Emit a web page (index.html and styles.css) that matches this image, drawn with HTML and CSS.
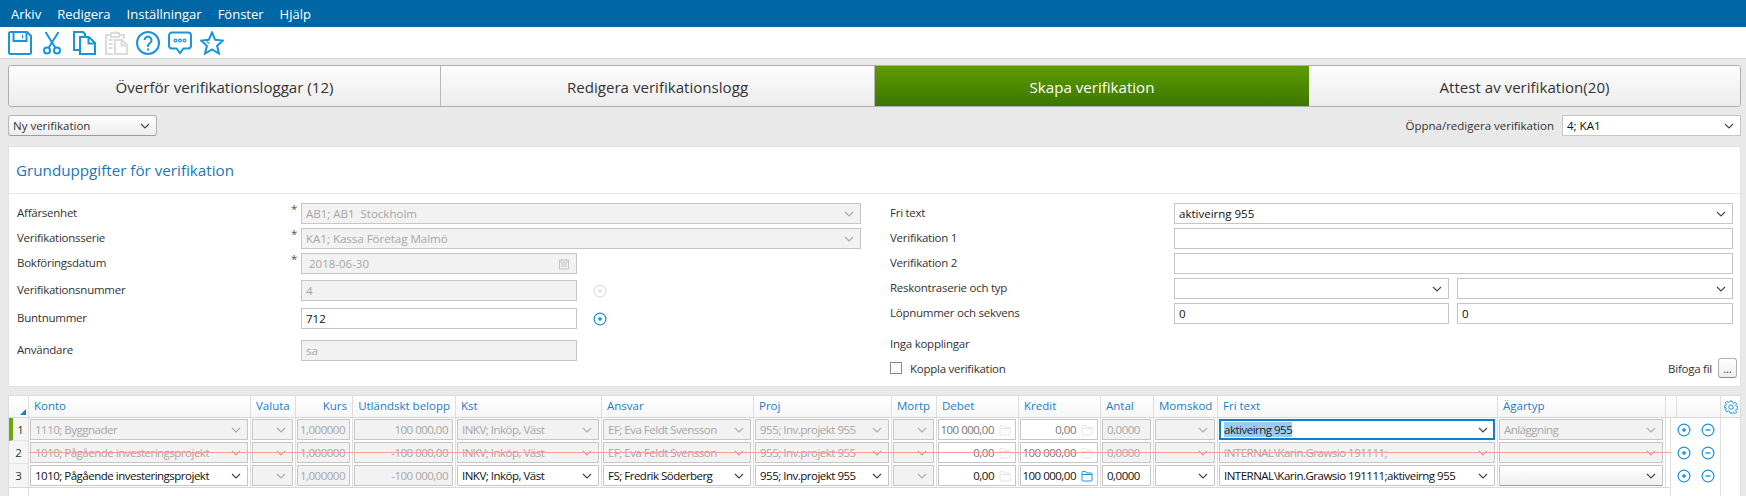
FILE: index.html
```html
<!DOCTYPE html>
<html lang="sv">
<head>
<meta charset="utf-8">
<title>Skapa verifikation</title>
<link rel="stylesheet" href="styles.css">
</head>
<body>
<svg class="sprites" xmlns="http://www.w3.org/2000/svg">
  <symbol id="chev" viewBox="0 0 10 6"><path d="M1 1l4 4 4-4" fill="none" stroke="currentColor" stroke-width="1.1"/></symbol>
  <symbol id="plus" viewBox="0 0 14 14"><circle cx="7" cy="7" r="5.9" fill="none" stroke="currentColor" stroke-width="1.2"/><path d="M5 7h4M7 5v4" stroke="currentColor" stroke-width="1.4"/></symbol>
  <symbol id="minus" viewBox="0 0 14 14"><circle cx="7" cy="7" r="5.9" fill="none" stroke="currentColor" stroke-width="1.2"/><path d="M4.5 7h5" stroke="currentColor" stroke-width="1.4"/></symbol>
  <symbol id="folder" viewBox="0 0 12 12"><path d="M1 2.5a1 1 0 0 1 1-1h2.5l1 1.5H10a1 1 0 0 1 1 1V10a1 1 0 0 1-1 1H2a1 1 0 0 1-1-1zM1 4.5h10" fill="none" stroke="currentColor" stroke-width="1"/></symbol>
</svg>

<nav class="menubar">
  <span>Arkiv</span><span>Redigera</span><span>Inställningar</span><span>Fönster</span><span>Hjälp</span>
</nav>

<div class="toolbar">
  <svg class="tool" viewBox="0 0 24 24"><path d="M2.500 1h16.500l4 4v16.500a1.500 1.500 0 0 1-1.500 1.500h-19a1.500 1.500 0 0 1-1.500-1.500v-19a1.500 1.500 0 0 1 1.500-1.500z"/><path d="M5.500 1v9h13V1"/><path class="fine" d="M14.500 3.500v4"/></svg>
  <svg class="tool tool-cut" viewBox="0 0 18 24"><circle cx="4" cy="19.500" r="3"/><circle cx="14" cy="19.500" r="3"/><path d="M5.500 17L15.500 1M12.500 17L2.500 1"/></svg>
  <svg class="tool" viewBox="0 0 24 24"><path d="M7 19H2V1h9l2 2v3"/><path d="M8 6h9l6 6v11H8zM16.500 6v6.500H23"/></svg>
  <svg class="tool tool-off" viewBox="0 0 24 24"><path d="M7 4H2v19h7M15 4h5v4M7 2h2.500a2 2 0 0 1 3 0H15v4H7z"/><path d="M11 9h7l5 5v9H11zM17.500 9v5.500H23M4.500 9h4M4.500 13h4M4.500 17h4"/></svg>
  <svg class="tool" viewBox="0 0 24 24"><circle cx="12" cy="12" r="11"/><path d="M8.500 9a3.500 3.500 0 1 1 5.500 3c-1.500 1-2 1.500-2 3v1"/><path d="M12 17.500v2"/></svg>
  <svg class="tool" viewBox="0 0 24 24"><path d="M4 1.500h16a3 3 0 0 1 3 3v10a3 3 0 0 1-3 3h-4.500l-3.500 4.500-3.500-4.500H4a3 3 0 0 1-3-3v-10a3 3 0 0 1 3-3z"/><circle class="fine" cx="7.500" cy="9.500" r="1.400"/><circle class="fine" cx="12" cy="9.500" r="1.400"/><circle class="fine" cx="16.500" cy="9.500" r="1.400"/></svg>
  <svg class="tool" viewBox="0 0 24 24"><path d="M12 1.500l3.200 7.300 7.800.8-5.900 5.200 1.800 7.700-6.900-4.100-6.900 4.100 1.800-7.700L1 9.600l7.800-.8z"/><path class="fine" d="M6.500 10.500l3 2"/></svg>
</div>

<main class="content">
  <div class="tabs">
    <div class="tab">Överför verifikationsloggar (12)</div>
    <div class="tab">Redigera verifikationslogg</div>
    <div class="tab tab-active">Skapa verifikation</div>
    <div class="tab">Attest av verifikation(20)</div>
  </div>

  <div class="actions">
    <div class="button-select">Ny verifikation<svg class="chev"><use href="#chev"/></svg></div>
    <div class="open-edit">
      <span>Öppna/redigera verifikation</span>
      <div class="field open-field">4; KA1<svg class="chev"><use href="#chev"/></svg></div>
    </div>
  </div>

  <section class="card">
    <h2 class="card-title">Grunduppgifter för verifikation</h2>
    <div class="form">
      <div class="col">
        <div class="frow"><label>Affärsenhet</label><i class="star">*</i><div class="field off">AB1; AB1&nbsp; Stockholm<svg class="chev"><use href="#chev"/></svg></div></div>
        <div class="frow"><label>Verifikationsserie</label><i class="star">*</i><div class="field off">KA1; Kassa Företag Malmö<svg class="chev"><use href="#chev"/></svg></div></div>
        <div class="frow"><label>Bokföringsdatum</label><i class="star">*</i><div class="short"><div class="field off date">2018-06-30<svg class="cal" viewBox="0 0 12 12"><path d="M1.500 2h9v9h-9zM1.500 4h9M3.500 1v1.500M8.500 1v1.500M3 6h6M3 8h6"/></svg></div></div></div>
        <div class="frow gap-6"><label>Verifikationsnummer</label><i class="star"></i><div class="short"><div class="field off">4</div><svg class="round off-icon"><use href="#plus"/></svg></div></div>
        <div class="frow gap-7"><label>Buntnummer</label><i class="star"></i><div class="short"><div class="field on">712</div><svg class="round"><use href="#plus"/></svg></div></div>
        <div class="frow gap-11"><label>Användare</label><i class="star"></i><div class="short"><div class="field off">sa</div></div></div>
      </div>
      <div class="col">
        <div class="frow"><label>Fri text</label><i class="star"></i><div class="field on">aktiveirng 955<svg class="chev"><use href="#chev"/></svg></div></div>
        <div class="frow"><label>Verifikation 1</label><i class="star"></i><div class="field on"></div></div>
        <div class="frow"><label>Verifikation 2</label><i class="star"></i><div class="field on"></div></div>
        <div class="frow"><label>Reskontraserie och typ</label><i class="star"></i><div class="pair"><div class="field on"><svg class="chev"><use href="#chev"/></svg></div><div class="field on"><svg class="chev"><use href="#chev"/></svg></div></div></div>
        <div class="frow"><label>Löpnummer och sekvens</label><i class="star"></i><div class="pair"><div class="field on">0</div><div class="field on">0</div></div></div>
        <div class="links">Inga kopplingar</div>
        <div class="link-row">
          <span class="check"></span><span class="check-label">Koppla verifikation</span>
          <span class="attach">Bifoga fil</span><span class="dots">...</span>
        </div>
      </div>
    </div>
  </section>

  <section class="grid">
    <div class="g-row g-head">
      <div class="c c-num"><span class="corner"></span></div>
      <div class="c">Konto</div><div class="c">Valuta</div><div class="c right">Kurs</div><div class="c right">Utländskt belopp</div>
      <div class="c">Kst</div><div class="c">Ansvar</div><div class="c">Proj</div><div class="c">Mortp</div>
      <div class="c">Debet</div><div class="c">Kredit</div><div class="c">Antal</div><div class="c">Momskod</div>
      <div class="c">Fri text</div><div class="c">Ägartyp</div><div class="c"></div><div class="c"></div>
      <div class="c c-gear"><svg class="gear" viewBox="0 0 14 14"><circle cx="7" cy="7" r="2.200"/><path d="M6 1h2l.4 1.600 1.400.6 1.400-.9 1.400 1.400-.9 1.400.6 1.400 1.600.4v2l-1.600.4-.6 1.400.9 1.400-1.400 1.400-1.400-.9-1.400.6L8 13H6l-.4-1.600-1.400-.6-1.400.9-1.400-1.400.9-1.400-.6-1.400L.1 8V6l1.600-.4.6-1.400-.9-1.400 1.400-1.400 1.400.9 1.400-.6z"/></svg></div>
    </div>

    <div class="g-row">
      <div class="c c-num c-mark">1</div>
      <div class="c"><div class="field off">1110; Byggnader<svg class="chev"><use href="#chev"/></svg></div></div>
      <div class="c"><div class="field off"><svg class="chev"><use href="#chev"/></svg></div></div>
      <div class="c"><div class="field off num">1,000000</div></div>
      <div class="c"><div class="field off num">100 000,00</div></div>
      <div class="c"><div class="field off">INKV; Inköp, Väst<svg class="chev"><use href="#chev"/></svg></div></div>
      <div class="c"><div class="field off">EF; Eva Feldt Svensson<svg class="chev"><use href="#chev"/></svg></div></div>
      <div class="c"><div class="field off">955; Inv.projekt 955<svg class="chev"><use href="#chev"/></svg></div></div>
      <div class="c"><div class="field off"><svg class="chev"><use href="#chev"/></svg></div></div>
      <div class="c"><div class="field on dim num">100 000,00<svg class="folder"><use href="#folder"/></svg></div></div>
      <div class="c"><div class="field on dim num">0,00<svg class="folder"><use href="#folder"/></svg></div></div>
      <div class="c"><div class="field off">0,0000</div></div>
      <div class="c"><div class="field off"><svg class="chev"><use href="#chev"/></svg></div></div>
      <div class="c"><div class="field on focus"><span class="selected">aktiveirng 955</span><svg class="chev"><use href="#chev"/></svg></div></div>
      <div class="c"><div class="field off">Anläggning<svg class="chev"><use href="#chev"/></svg></div></div>
      <div class="c"></div>
      <div class="c c-acts"><svg class="round"><use href="#plus"/></svg><svg class="round"><use href="#minus"/></svg></div>
      <div class="c c-gear"></div>
    </div>

    <div class="g-row g-deleted">
      <div class="c c-num">2</div>
      <div class="c"><div class="field off">1010; Pågående investeringsprojekt<svg class="chev"><use href="#chev"/></svg></div></div>
      <div class="c"><div class="field off"><svg class="chev"><use href="#chev"/></svg></div></div>
      <div class="c"><div class="field off num">1,000000</div></div>
      <div class="c"><div class="field off num">-100 000,00</div></div>
      <div class="c"><div class="field off">INKV; Inköp, Väst<svg class="chev"><use href="#chev"/></svg></div></div>
      <div class="c"><div class="field off">EF; Eva Feldt Svensson<svg class="chev"><use href="#chev"/></svg></div></div>
      <div class="c"><div class="field off">955; Inv.projekt 955<svg class="chev"><use href="#chev"/></svg></div></div>
      <div class="c"><div class="field off"><svg class="chev"><use href="#chev"/></svg></div></div>
      <div class="c"><div class="field on dim num">0,00<svg class="folder"><use href="#folder"/></svg></div></div>
      <div class="c"><div class="field on dim num">100 000,00<svg class="folder"><use href="#folder"/></svg></div></div>
      <div class="c"><div class="field off">0,0000</div></div>
      <div class="c"><div class="field off"><svg class="chev"><use href="#chev"/></svg></div></div>
      <div class="c"><div class="field off">INTERNAL\Karin.Grawsio 191111;<svg class="chev"><use href="#chev"/></svg></div></div>
      <div class="c"><div class="field off"><svg class="chev"><use href="#chev"/></svg></div></div>
      <div class="c"></div>
      <div class="c c-acts"><svg class="round"><use href="#plus"/></svg><svg class="round"><use href="#minus"/></svg></div>
      <div class="c c-gear"></div>
      <span class="strike"></span>
    </div>

    <div class="g-row g-last">
      <div class="c c-num">3</div>
      <div class="c"><div class="field on">1010; Pågående investeringsprojekt<svg class="chev"><use href="#chev"/></svg></div></div>
      <div class="c"><div class="field off"><svg class="chev"><use href="#chev"/></svg></div></div>
      <div class="c"><div class="field off num">1,000000</div></div>
      <div class="c"><div class="field off num">-100 000,00</div></div>
      <div class="c"><div class="field on">INKV; Inköp, Väst<svg class="chev"><use href="#chev"/></svg></div></div>
      <div class="c"><div class="field on">FS; Fredrik Söderberg<svg class="chev"><use href="#chev"/></svg></div></div>
      <div class="c"><div class="field on">955; Inv.projekt 955<svg class="chev"><use href="#chev"/></svg></div></div>
      <div class="c"><div class="field off"><svg class="chev"><use href="#chev"/></svg></div></div>
      <div class="c"><div class="field on num">0,00<svg class="folder"><use href="#folder"/></svg></div></div>
      <div class="c"><div class="field on num">100 000,00<svg class="folder live"><use href="#folder"/></svg></div></div>
      <div class="c"><div class="field on">0,0000</div></div>
      <div class="c"><div class="field on"><svg class="chev"><use href="#chev"/></svg></div></div>
      <div class="c"><div class="field on">INTERNAL\Karin.Grawsio 191111;aktiveirng 955<svg class="chev"><use href="#chev"/></svg></div></div>
      <div class="c"><div class="field raised"><svg class="chev"><use href="#chev"/></svg></div></div>
      <div class="c"></div>
      <div class="c c-acts"><svg class="round"><use href="#plus"/></svg><svg class="round"><use href="#minus"/></svg></div>
      <div class="c c-gear"></div>
    </div>

    <div class="g-row g-filler">
      <div class="c c-num"></div>
      <div class="c c-span"></div>
      <div class="c"></div>
      <div class="c c-gear"></div>
    </div>
  </section>
</main>
</body>
</html>
```
FILE: styles.css
```css
* { box-sizing: border-box; }
html, body { margin: 0; height: 496px; overflow: hidden; }
body {
  background: #e9e9e9;
  color: #333;
  font-family: "Open Sans", "Liberation Sans", sans-serif;
  font-size: 11.5px;
  display: flex;
  flex-direction: column;
}
.sprites { display: none; }

.menubar {
  height: 27px;
  background: #0067a5;
  color: #fff;
  display: flex;
  align-items: center;
  gap: 16px;
  padding-left: 11px;
  font-size: 13px;
}

.toolbar {
  height: 32px;
  background: #fff;
  border-bottom: 1px solid #d8d8d8;
  display: flex;
  align-items: center;
  gap: 8px;
  padding-left: 8px;
}
.tool {
  width: 24px;
  height: 24px;
  fill: none;
  stroke: #1a94dc;
  stroke-width: 2;
  flex: none;
}
.tool .fine { stroke-width: 1.2; }
.tool-cut { width: 18px; margin: 0 3px; }
.tool-off { stroke: #dcdcdc; }

.content {
  flex: 1;
  padding: 6px 5px 0 8px;
  display: flex;
  flex-direction: column;
  min-height: 0;
}

.tabs {
  height: 42px;
  display: grid;
  grid-template-columns: 432px 434px 434px 1fr;
  border: 1px solid #aeaeae;
  border-radius: 3px;
  flex: none;
  overflow: hidden;
}
.tab {
  display: flex;
  align-items: center;
  justify-content: center;
  padding-top: 2px;
  font-size: 15.1px;
  background: linear-gradient(#fdfdfd, #ececec);
  border-right: 1px solid #b8b8b8;
  color: #333;
}
.tab:last-child { border-right: 0; }
.tab-active {
  background: linear-gradient(#5c9c00, #3d7600);
  color: #fff;
  border-right: 0;
}

.actions {
  display: flex;
  justify-content: space-between;
  align-items: center;
  height: 21px;
  margin-top: 8px;
  flex: none;
}
.button-select {
  width: 149px;
  height: 21px;
  border: 1px solid #b4b4b4;
  border-bottom-color: #9c9c9c;
  border-radius: 3px;
  background: linear-gradient(#fff, #ededed);
  display: flex;
  align-items: center;
  justify-content: space-between;
  padding: 0 6px 0 4px;
  color: #333;
}
.open-edit { display: flex; align-items: center; gap: 8px; }
.open-field { width: 179px; }

.card {
  margin-top: 10px;
  height: 241px;
  flex: none;
  background: #fff;
  border: 1px solid #e2e2e2;
}
.card-title {
  margin: 0;
  height: 47px;
  padding-left: 7px;
  display: flex;
  align-items: center;
  font-size: 15.2px;
  font-weight: 400;
  color: #1a76b9;
  border-bottom: 1px solid #e6e6e6;
}
.form {
  display: grid;
  grid-template-columns: 844px 843px;
  column-gap: 29px;
  padding: 9px 0 0 8px;
}
.col { display: flex; flex-direction: column; gap: 4px; }
.frow {
  display: grid;
  grid-template-columns: 274px 10px 1fr;
  align-items: center;
  height: 21px;
}
.frow label { letter-spacing: -0.25px; margin-top: -2px; }
.frow.gap-6 { margin-top: 2px; }
.frow.gap-7 { margin-top: 3px; }
.frow.gap-11 { margin-top: 7px; }
.star {
  font-style: normal;
  align-self: start;
  line-height: 12px;
  color: #555;
}
.short {
  display: grid;
  grid-template-columns: 276px 14px;
  column-gap: 16px;
  align-items: center;
}
.pair { display: grid; grid-template-columns: 275px 276px; column-gap: 8px; }

.field {
  height: 21px;
  min-width: 0;
  border: 1px solid #c6c6c6;
  display: flex;
  align-items: center;
  justify-content: space-between;
  padding: 0 6px 0 4px;
  white-space: nowrap;
  overflow: hidden;
  color: #111;
  background: #fff;
}
.g-row .field { letter-spacing: -0.5px; }
.field.off { background: #f2f2f2; color: #a6a6a6; }
.field.date { padding-left: 7px; }
.field.dim { color: #777; }
.field.num { justify-content: flex-end; gap: 5px; padding: 0 4px; }
.field.focus { border: 2px solid #0a80cf; padding: 0 5px 0 3px; }
.field.raised { background: linear-gradient(#fff, #f0f0f0); border-bottom-color: #9c9c9c; }
.selected { background: #9ccbf1; color: #222; }

.chev { width: 10px; height: 6px; flex: none; color: #444; margin-left: auto; }
.field.off .chev { color: #aaa; }
.field.num .chev { margin-left: 0; }
.cal { width: 12px; height: 12px; fill: none; stroke: #c4c4c4; margin-left: auto; }
.round { width: 14px; height: 14px; color: #1a94dc; flex: none; }
.off-icon { color: #dedede; }
.folder { width: 12px; height: 12px; color: #e4e4e4; flex: none; }
.folder.live { color: #1a94dc; }

.links { margin-top: 6px; height: 20px; line-height: 20px; letter-spacing: -0.25px; }
.link-row {
  display: flex;
  align-items: center;
  height: 20px;
  letter-spacing: -0.25px;
}
.check {
  width: 12px;
  height: 12px;
  border: 1px solid #888;
  background: #fff;
  flex: none;
}
.check-label { margin-left: 8px; }
.attach { margin-left: auto; }
.dots {
  width: 19px;
  height: 20px;
  margin-left: 6px;
  margin-right: -4px;
  border: 1px solid #b0b0b0;
  border-bottom-color: #8c8c8c;
  border-radius: 3px;
  background: linear-gradient(#fff, #eee);
  display: flex;
  align-items: center;
  justify-content: center;
}

.grid {
  margin-top: 8px;
  flex: 1;
  min-height: 0;
  display: flex;
  flex-direction: column;
  background: #fff;
  border-top: 1px solid #dcdcdc;
  border-left: 1px solid #dcdcdc;
  border-right: 1px solid #dcdcdc;
}
.g-row {
  position: relative;
  display: grid;
  grid-template-columns: 20px 222px 45px 57px 103px 146px 152px 138px 45px 82px 82px 53px 64px 280px 168px 5px 50px 19px;
  height: 23px;
  flex: none;
}
.g-head {
  height: 22px;
  background: linear-gradient(#fff, #f6f6f6);
  border-bottom: 1px solid #d8d8d8;
  color: #1f7cc0;
}
.g-head .c { padding: 0 5px 2px; display: flex; align-items: center; border-right: 1px solid #dedede; white-space: nowrap; overflow: hidden; }
.g-head .c.right { justify-content: flex-end; }
.g-head .c-gear { padding: 0; justify-content: center; border-right: 0; }
.g-head .c-num { position: relative; }
.corner {
  position: absolute;
  right: 2px;
  bottom: 2px;
  border-style: solid;
  border-width: 0 0 6px 6px;
  border-color: transparent transparent #1f7cc0 transparent;
}
.gear { width: 14px; height: 14px; fill: none; stroke: #1a94dc; stroke-width: 1; }

.c { padding: 1px 2px 1px 1px; border-right: 1px solid #dedede; min-width: 0; }
.c-num {
  display: flex;
  align-items: center;
  justify-content: center;
  padding: 0;
  background: #f5f5f5;
  border-bottom: 1px solid #e4e4e4;
  color: #333;
}
.g-head .c-num { background: transparent; border-bottom: 0; }
.c-mark { border-left: 4px solid #6aa80e; }
.c-gear { border-right: 0; padding: 0; }
.c-acts {
  display: flex;
  align-items: center;
  justify-content: space-between;
  padding: 0 5px 0 6px;
}
.g-last .c:nth-child(-n+16) { border-bottom: 1px solid #d8d8d8; height: 24px; }
.g-last { height: 24px; }
.strike {
  position: absolute;
  left: 20px;
  width: 1642px;
  top: 11px;
  height: 1px;
  background: #f2a0a0;
}
.g-filler { flex: 1; grid-template-columns: 20px 1642px 50px 19px; }
.c-span, .g-filler .c { padding: 0; }
.g-filler .c-num { background: #fff; border-bottom: 0; }
```
